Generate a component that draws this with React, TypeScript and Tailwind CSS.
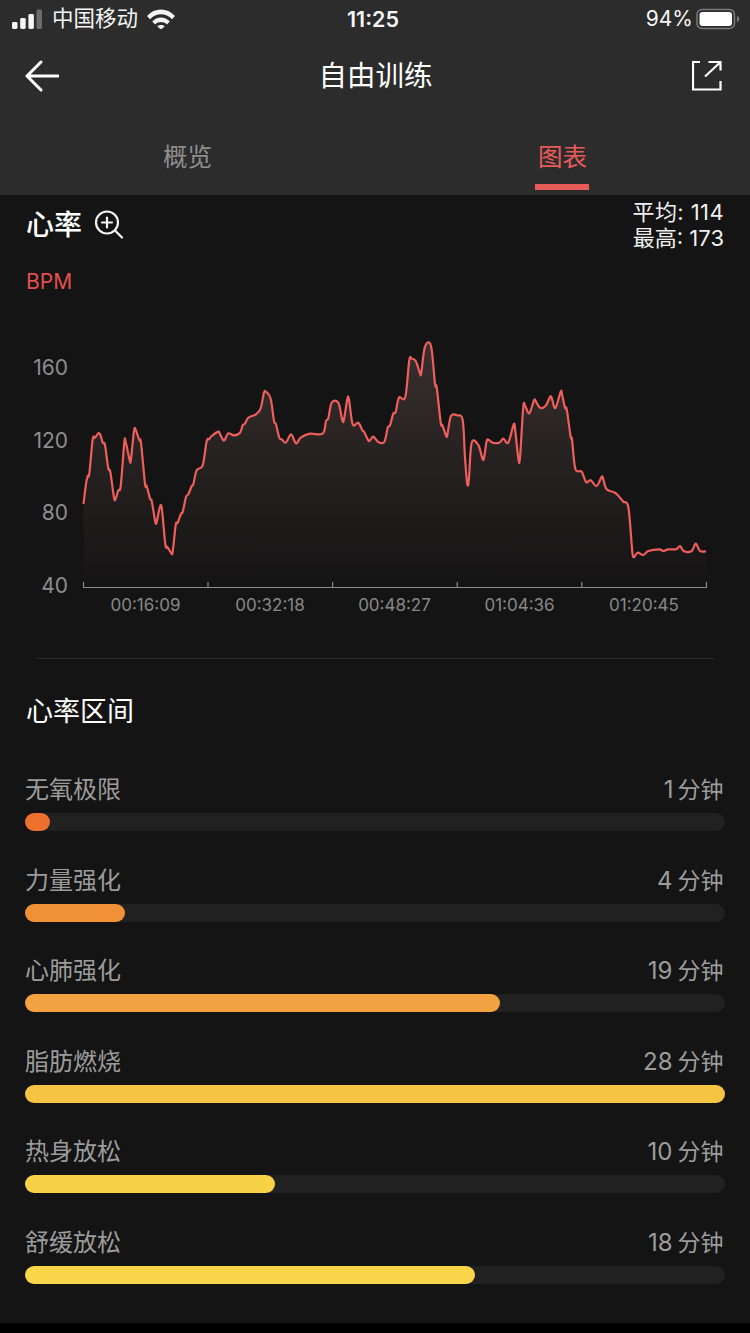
import React from 'react';

const FONT = '"Inter", "Noto Sans CJK SC", sans-serif';

const zones = [
  { name: '无氧极限', value: '1', gap: false, width: 25, color: 'bg-[#ee702f]' },
  { name: '力量强化', value: '4', gap: true, width: 100, color: 'bg-[#f09138]' },
  { name: '心肺强化', value: '19', gap: true, width: 475, color: 'bg-[#f3a242]' },
  { name: '脂肪燃烧', value: '28', gap: true, width: 700, color: 'bg-[#f5c443]' },
  { name: '热身放松', value: '10', gap: true, width: 250, color: 'bg-[#f8d246]' },
  { name: '舒缓放松', value: '18', gap: true, width: 450, color: 'bg-[#f9d549]' },
];

const pts: [number, number][] = [
  [83.5, 503], [86, 483], [87.7, 475], [89.3, 472.7], [92.7, 438.3], [95, 436.7], [98.7, 432], [100.7, 435],
  [102.7, 441.7], [105, 444], [108.3, 467.3], [110.3, 470.7], [114, 496.7], [115.7, 497.7], [118.3, 489.3], [120.7, 485],
  [124.3, 441.7], [125.7, 441], [129.7, 459.3], [131, 458.3], [134, 430], [135.7, 428.7], [139.3, 439.3], [141, 441.7],
  [145, 482.7], [146.7, 485], [150, 497.7], [151.7, 500], [155.3, 520.7], [156.7, 521], [159.3, 508.3], [161.7, 506.7],
  [165.3, 543.3], [167.3, 546], [171, 551.7], [172.7, 550.7], [175.7, 524], [177.7, 521.7], [181, 512.7], [182.7, 511],
  [186, 496], [188.3, 493.3], [191.7, 485], [193.3, 483.3], [196.7, 469.3], [202.7, 464.3], [206.7, 440], [209, 438.3],
  [211.7, 435], [218.3, 430.7], [220, 433.3], [223.3, 439.3], [225, 438.3], [228.3, 432.3], [234, 434.3], [240, 431.7],
  [242.7, 424.3], [245, 422.7], [248.3, 416.7], [256, 413.3], [260.7, 407.3], [264, 391.7], [266, 390.7], [270.7, 397.7],
  [274, 420], [276, 423.3], [279.3, 436.7], [281.7, 438.3], [285.7, 441.7], [290, 434.3], [292, 434.3], [295.3, 441.7],
  [297.3, 441.7], [300.7, 436.7], [310, 432.7], [322.7, 432.7], [326, 420], [328.3, 417.3], [331.7, 401.7], [338.3, 401.7],
  [342.3, 419.3], [344, 418.3], [347.3, 398.3], [349, 398.3], [352.7, 423.3], [358.3, 421.7], [362.3, 429.3], [364, 430.7],
  [368.3, 439.3], [370, 439.3], [373.3, 435.7], [378.3, 441], [384.3, 441], [387.7, 426.7], [390, 424.3], [393.3, 412.7],
  [395.7, 411], [399, 396.7], [405.3, 396], [409.3, 359.3], [411.7, 357.7], [415.7, 360], [420, 372.3], [421.3, 371.7],
  [425, 345.7], [431, 345], [435, 383.3], [436.7, 386], [440.7, 421.7], [442.3, 424], [446, 434.3], [447.3, 434],
  [451, 415], [457.3, 414.3], [462.7, 419.3], [465, 456.7], [467.3, 483.3], [469, 476.7], [471.7, 441.7], [478.3, 444],
  [482.3, 457.3], [484, 457.3], [486.7, 440], [489.3, 439.3], [492.7, 441.7], [499.3, 441.7], [503.3, 437.7], [508.3, 441.7],
  [513.7, 423.3], [515.3, 430], [518.3, 457.3], [520, 456.7], [523.3, 406], [525.3, 405.3], [529.3, 412.3], [534, 399.3],
  [535.7, 400], [540, 406.7], [545.7, 404.7], [550, 396], [551.7, 396.7], [555.3, 407], [560.7, 390.7], [562, 393.3],
  [565, 406.7], [566.7, 408.3], [570.7, 436], [572, 438.3], [575.3, 467.7], [581.7, 470.7], [586, 481], [590.7, 479.3],
  [596.7, 485], [601.7, 475.7], [603.3, 478.3], [606.7, 488.3], [615, 491.7], [620, 496.7], [623.3, 500.7], [628.3, 506],
  [631.7, 543.3], [633.3, 556], [637.7, 551.7], [643.3, 554], [648.3, 550], [659.3, 548.3], [663.3, 550], [668.3, 548.3],
  [676, 548.3], [680, 545], [684, 550.3], [691.7, 550], [695.7, 542.7], [700, 550], [706, 550.3],
];

// catmull-rom so the trace stays rounded like the app's
function smooth(p: [number, number][]) {
  let d = `M${p[0][0]} ${p[0][1]}`;
  for (let i = 0; i < p.length - 1; i++) {
    const a = p[Math.max(i - 1, 0)];
    const b = p[i];
    const c = p[i + 1];
    const e = p[Math.min(i + 2, p.length - 1)];
    const c1x = b[0] + (c[0] - a[0]) / 6;
    const c1y = b[1] + (c[1] - a[1]) / 6;
    const c2x = c[0] - (e[0] - b[0]) / 6;
    const c2y = c[1] - (e[1] - b[1]) / 6;
    d += `C${c1x.toFixed(1)} ${c1y.toFixed(1)} ${c2x.toFixed(1)} ${c2y.toFixed(1)} ${c[0]} ${c[1]}`;
  }
  return d;
}

const line = smooth(pts);

function Chart() {
  return (
    <svg width="750" height="320" viewBox="0 310 750 320" className="block">
      <defs>
        <linearGradient id="area" gradientUnits="userSpaceOnUse" x1="0" y1="345" x2="0" y2="586">
          <stop offset="0" stopColor="#382f2d" />
          <stop offset="0.45" stopColor="#262221" />
          <stop offset="1" stopColor="#151414" />
        </linearGradient>
      </defs>
      <path d={`${line}L706 586L83.5 586Z`} fill="url(#area)" />
      <path d={line} fill="none" stroke="#ee5f5c" strokeWidth="2.2" strokeLinejoin="round" />
      <path d="M83.5 581V586.5H706.5V581M208 581V586M332.6 581V586M457.2 581V586M581.8 581V586" fill="none" stroke="#8c8c8c" strokeWidth="1.2" />
      <g fill="#8e8e8e" fontSize="21" textAnchor="end" fontFamily={FONT}>
        <text x="68" y="374">160</text>
        <text x="68" y="447">120</text>
        <text x="68" y="519">80</text>
        <text x="68" y="592">40</text>
      </g>
      <g fill="#888888" fontSize="17" textAnchor="middle" fontFamily={FONT}>
        <text x="145.5" y="610">00:16:09</text>
        <text x="270" y="610">00:32:18</text>
        <text x="394.5" y="610">00:48:27</text>
        <text x="519.5" y="610">01:04:36</text>
        <text x="644" y="610">01:20:45</text>
      </g>
    </svg>
  );
}

function StatusBar() {
  return (
    <div className="h-[37px] relative flex items-center justify-between pl-[12px] pr-[10px] text-[#f5f5f5]">
      <div className="flex items-center">
        <svg width="30" height="20" viewBox="0 0 30 20">
          <rect x="0" y="13" width="5.5" height="7" rx="1.4" fill="#f5f5f5" />
          <rect x="8.2" y="9" width="5.5" height="11" rx="1.4" fill="#f5f5f5" />
          <rect x="16.4" y="5" width="5.5" height="15" rx="1.4" fill="#f5f5f5" />
          <rect x="24.5" y="0.5" width="5.5" height="19.5" rx="1.4" fill="#6b6b6b" />
        </svg>
        <span className="ml-[10px] text-[21.5px] leading-none">中国移动</span>
        <svg width="28" height="20" viewBox="0 0 28 20" className="ml-[9px]">
          <path d="M0 7C7.6 -1.6 20.4 -1.6 28 7L25 10.2C18.9 3.6 9.1 3.6 3 10.2Z" fill="#f5f5f5" />
          <path d="M5.2 12.4C10.2 7.2 17.8 7.2 22.8 12.4L19.9 15.4C16.6 12.2 11.4 12.2 8.1 15.4Z" fill="#f5f5f5" />
          <path d="M10.3 17.4C12.4 15.6 15.6 15.6 17.7 17.4L14 20.5Z" fill="#f5f5f5" />
        </svg>
      </div>
      <span className="absolute left-[347px] top-[7px] text-[21.5px] leading-[24px] font-semibold">11:25</span>
      <div className="flex items-center gap-[3px]">
        <span className="text-[21px] leading-none">94%</span>
        <svg width="44" height="22" viewBox="0 0 44 22">
          <rect x="1" y="1.5" width="37.5" height="19" rx="5" fill="none" stroke="#7a7a7a" strokeWidth="1.5" />
          <rect x="3.5" y="4" width="32.5" height="14" rx="3" fill="#ffffff" />
          <path d="M41 8V14C42.5 13.6 43.3 12.4 43.3 11S42.5 8.4 41 8Z" fill="#7a7a7a" />
        </svg>
      </div>
    </div>
  );
}

function App() {
  return (
    <div className="w-[750px] h-[1333px] overflow-hidden bg-black flex flex-col" style={{ fontFamily: FONT }}>
      <header className="h-[195px] bg-[#2c2c2c] shrink-0">
        <StatusBar />
        <div className="h-[78px] flex items-center justify-between pl-[25px] pr-[28px]">
          <svg width="34" height="32" viewBox="0 0 34 32">
            <path d="M16 2L2 16L16 30M2 16H33" fill="none" stroke="#ffffff" strokeWidth="3" strokeLinecap="round" strokeLinejoin="round" />
          </svg>
          <h1 className="text-[28.5px] leading-none text-white font-normal">自由训练</h1>
          <svg width="30" height="30" viewBox="0 0 30 30">
            <path d="M8 1H1V28.5H28.5V20M16.5 1H28.5V9.5M27.5 2L13 15.5" fill="none" stroke="#ffffff" strokeWidth="2.2" />
          </svg>
        </div>
        <div className="h-[80px] flex">
          <div className="w-1/2 flex flex-col items-center">
            <span className="mt-[24px] text-[24.5px] leading-[36px] text-[#8f8f8f]">概览</span>
          </div>
          <div className="w-1/2 flex flex-col items-center">
            <span className="mt-[24px] text-[24.5px] leading-[36px] text-[#e95b58]">图表</span>
            <div className="mt-[9px] -ml-[1px] w-[54px] h-[6px] bg-[#e95b58]" />
          </div>
        </div>
      </header>

      <main className="h-[1128px] shrink-0 bg-[#141414]">
        <div className="flex justify-between items-start pl-[26px] pr-[26px] pt-[4px]">
          <div className="flex items-center mt-[7px]">
            <h2 className="text-[28px] leading-[38px] font-medium text-white">心率</h2>
            <svg width="30" height="30" viewBox="0 0 30 30" className="ml-[12px]">
              <circle cx="13" cy="12.5" r="11" fill="none" stroke="#f2f2f2" strokeWidth="2.2" />
              <path d="M8 12.5H18M13 7.5V17.5M21 20.5L28 27.5" fill="none" stroke="#f2f2f2" strokeWidth="2.2" strokeLinecap="round" />
            </svg>
          </div>
          <div className="text-right text-[22px] leading-[26px] text-[#f0f0f0]">
            <div className="tracking-[0.4px]">平均: 114</div>
            <div>最高: 173</div>
          </div>
        </div>
        <div className="pl-[26px] mt-[18px] text-[21px] leading-[26px] text-[#e5504f]">BPM</div>
        <div className="mt-[16px]">
          <Chart />
        </div>
        <div className="mx-[36px] mt-[27px] h-px bg-[#2a2a2a]" />
        <h2 className="ml-[26px] mt-[34px] text-[27px] leading-[38px] font-normal text-white">心率区间</h2>
        <div className="mx-[25px] mt-[41px] flex flex-col gap-[31.5px]">
          {zones.map((z) => (
            <div key={z.name}>
              <div className="h-[36px] mb-[5px] flex items-center justify-between text-[24px] leading-[36px] text-[#9c9c9c]">
                <span>{z.name}</span>
                <span className={z.gap ? 'flex gap-[5px] mr-[1.5px]' : 'flex gap-[4px] mr-[1.5px]'}>
                  <span>{z.value}</span>
                  <span className="text-[23px]">分钟</span>
                </span>
              </div>
              <div className="h-[18px] rounded-full bg-[#212121]">
                <div className={`h-full rounded-full ${z.color}`} style={{ width: z.width }} />
              </div>
            </div>
          ))}
        </div>
      </main>
    </div>
  );
}

export default App;
